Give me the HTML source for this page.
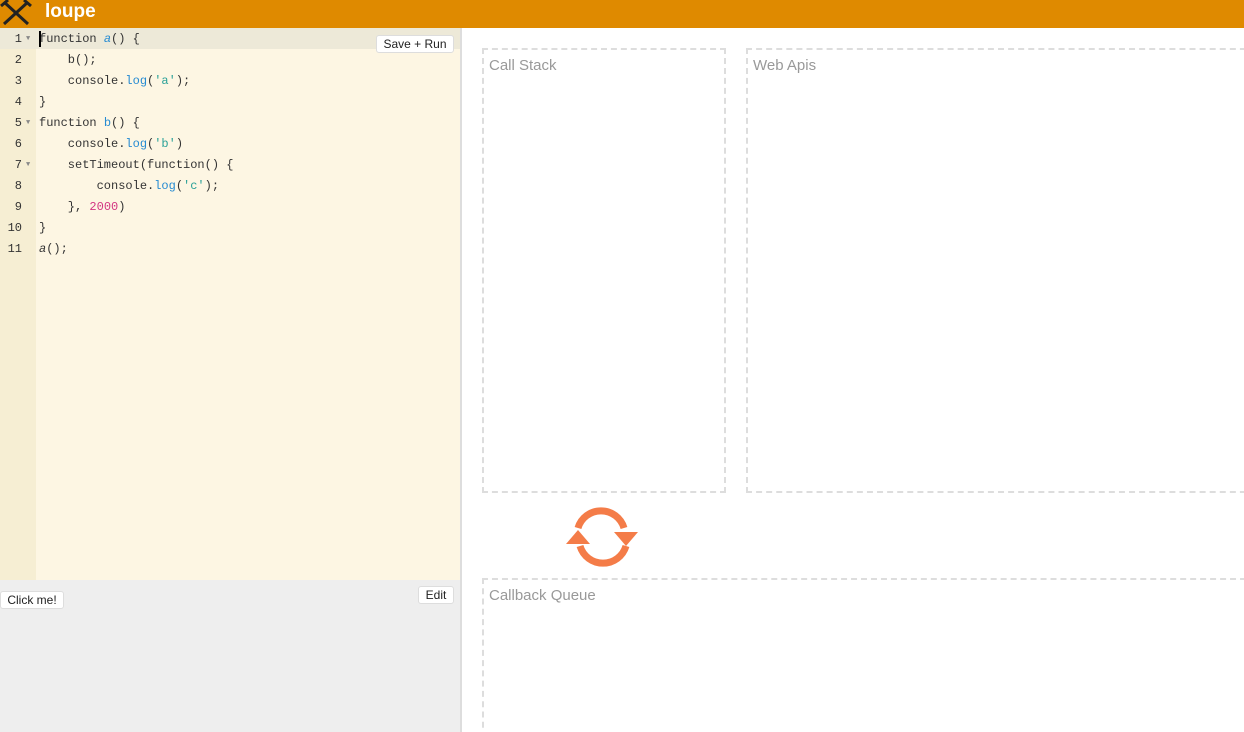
<!DOCTYPE html>
<html style="width:1244px;height:732px;overflow:hidden"><head><style>
*{margin:0;padding:0;box-sizing:border-box}
body{width:1244px;height:732px;overflow:hidden;background:#fff;font-family:"Liberation Sans",sans-serif;position:relative}
#top{position:absolute;left:0;top:0;width:1244px;height:28px;background:#df8a00}
#top .t{position:absolute;left:45px;top:1px;color:#fff;font-weight:bold;font-size:19px}
#ed{position:absolute;left:0;top:28px;width:460px;height:552px;background:#fdf6e3}
#gut{position:absolute;left:0;top:0;width:36px;height:552px;background:#f6eed3}
.ln{position:absolute;left:0;width:460px;height:21px;font-family:"Liberation Mono",monospace;font-size:12px;line-height:21px;color:#333;padding-top:1px}
.ln .n{position:absolute;left:0;width:22px;text-align:right;color:#333}
.ln .c{position:absolute;left:39px;white-space:pre}
.ln .f{position:absolute;left:26px;font-size:7px;color:#888}
.b{color:#268bd2}.s{color:#2aa198}.r{color:#d33682}.i{font-style:italic}
#out{position:absolute;left:0;top:580px;width:460px;height:152px;background:#eee}
.btn{position:absolute;background:#fff;border:1px solid #ddd;border-radius:3px;font-size:12px;color:#222;text-align:center;line-height:16px;height:18px}
#div{position:absolute;left:460px;top:28px;width:2px;height:704px;background:#ddd}
.box{position:absolute;border:2px dashed #ddd}
.box span{position:absolute;left:5px;top:7px;color:#999;font-size:15px}
</style></head><body>
<div id="top"><svg width="32" height="26" viewBox="0 0 32 26" style="position:absolute;left:0;top:0"><path d="M4 2 L28 24 M28 2 L4 24" stroke="#222" stroke-width="3"/><path d="M1 6 L8 0 M24 0 L31 6" stroke="#222" stroke-width="3"/></svg><div class="t">loupe</div></div>
<div id="ed"><div id="gut"></div>
<div style="position:absolute;left:0;top:0;width:460px;height:21px;background:#ede9d8"></div>
<div class="ln" style="top:0"><span class="n">1</span><span class="f">▼</span><span class="c">function <span class="b i">a</span>() {</span></div>
<div style="position:absolute;left:39px;top:3px;width:2px;height:16px;background:#000"></div>
<div class="ln" style="top:21px"><span class="n">2</span><span class="c">    b();</span></div>
<div class="ln" style="top:42px"><span class="n">3</span><span class="c">    console.<span class="b">log</span>(<span class="s">'a'</span>);</span></div>
<div class="ln" style="top:63px"><span class="n">4</span><span class="c">}</span></div>
<div class="ln" style="top:84px"><span class="n">5</span><span class="f">▼</span><span class="c">function <span class="b">b</span>() {</span></div>
<div class="ln" style="top:105px"><span class="n">6</span><span class="c">    console.<span class="b">log</span>(<span class="s">'b'</span>)</span></div>
<div class="ln" style="top:126px"><span class="n">7</span><span class="f">▼</span><span class="c">    setTimeout(function() {</span></div>
<div class="ln" style="top:147px"><span class="n">8</span><span class="c">        console.<span class="b">log</span>(<span class="s">'c'</span>);</span></div>
<div class="ln" style="top:168px"><span class="n">9</span><span class="c">    }, <span class="r">2000</span>)</span></div>
<div class="ln" style="top:189px"><span class="n">10</span><span class="c">}</span></div>
<div class="ln" style="top:210px"><span class="n">11</span><span class="c"><span class="i">a</span>();</span></div>
<div class="btn" style="left:376px;top:7px;width:78px">Save + Run</div>
</div>
<div id="out"><div class="btn" style="left:0;top:11px;width:64px">Click me!</div><div class="btn" style="left:418px;top:6px;width:36px">Edit</div></div>
<div id="div"></div>
<div class="box" style="left:482px;top:48px;width:244px;height:445px"><span>Call Stack</span></div>
<div class="box" style="left:746px;top:48px;width:510px;height:445px"><span>Web Apis</span></div>
<div class="box" style="left:482px;top:578px;width:774px;height:160px"><span>Callback Queue</span></div>
<svg width="80" height="70" viewBox="0 0 80 70" style="position:absolute;left:562px;top:502px">
<path d="M16 26 A24 24 0 0 1 62 26" fill="none" stroke="#f47c48" stroke-width="7"/>
<path d="M64 44 A24 24 0 0 1 18 44" fill="none" stroke="#f47c48" stroke-width="7"/>
<polygon points="52,30 76,30 64,44" fill="#f47c48"/>
<polygon points="4,42 28,42 16,28" fill="#f47c48"/>
</svg>
</body></html>
